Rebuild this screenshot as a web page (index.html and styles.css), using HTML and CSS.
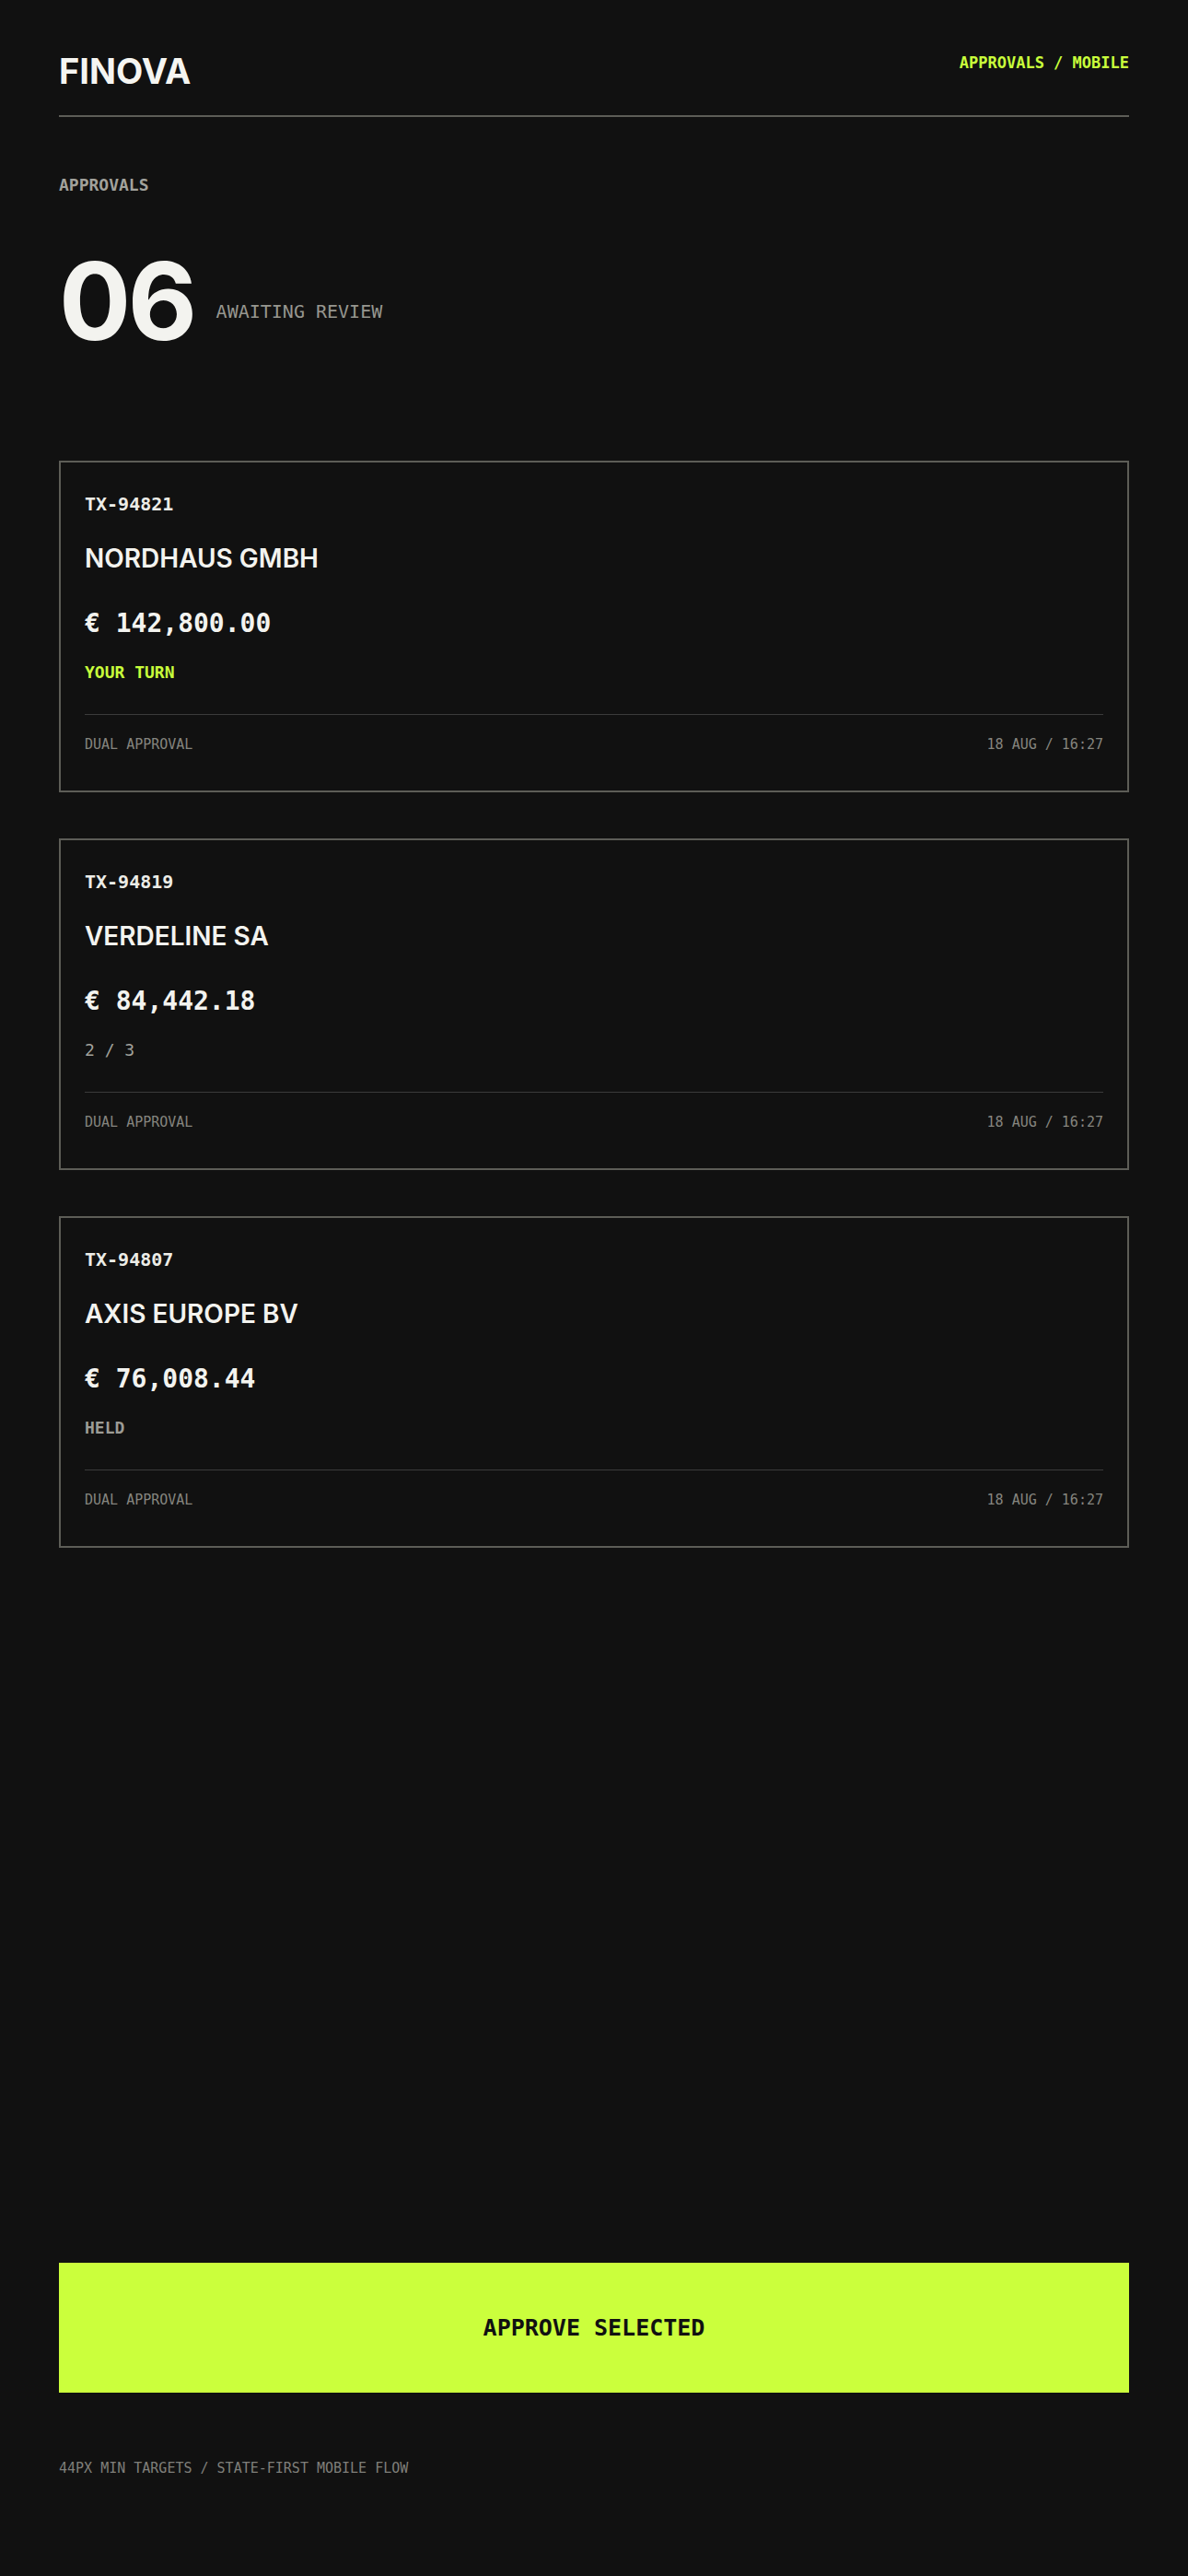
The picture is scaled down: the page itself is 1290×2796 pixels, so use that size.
FILE: index.html
```html
<!DOCTYPE html>
<html lang="en">
<head>
    <meta charset="UTF-8">
    <meta name="viewport" content="width=device-width, initial-scale=1.0">
    <title>Finova - Approvals</title>
    <link rel="stylesheet" href="styles.css">
</head>
<body>
    <div class="page">
        <header class="topbar">
            <div class="brand">FINOVA</div>
            <div class="crumb">APPROVALS / MOBILE</div>
        </header>

        <p class="section-label">APPROVALS</p>

        <div class="hero">
            <span class="count">06</span>
            <span class="count-sub">AWAITING REVIEW</span>
        </div>

        <!-- Approval queue -->
        <div class="cards">
            <div class="card">
                <div class="tx-id">TX-94821</div>
                <div class="payee">NORDHAUS GMBH</div>
                <div class="amount">€ 142,800.00</div>
                <div class="status status-turn">YOUR TURN</div>
                <div class="card-foot">
                    <span>DUAL APPROVAL</span>
                    <span>18 AUG / 16:27</span>
                </div>
            </div>

            <div class="card">
                <div class="tx-id">TX-94819</div>
                <div class="payee">VERDELINE SA</div>
                <div class="amount">€ 84,442.18</div>
                <div class="status status-progress">2 / 3</div>
                <div class="card-foot">
                    <span>DUAL APPROVAL</span>
                    <span>18 AUG / 16:27</span>
                </div>
            </div>

            <div class="card">
                <div class="tx-id">TX-94807</div>
                <div class="payee">AXIS EUROPE BV</div>
                <div class="amount">€ 76,008.44</div>
                <div class="status status-held">HELD</div>
                <div class="card-foot">
                    <span>DUAL APPROVAL</span>
                    <span>18 AUG / 16:27</span>
                </div>
            </div>
        </div>

        <div class="actions">
            <button class="approve-btn">APPROVE SELECTED</button>
            <p class="note">44PX MIN TARGETS / STATE-FIRST MOBILE FLOW</p>
        </div>
    </div>
</body>
</html>
```

FILE: styles.css
```css
* {
    box-sizing: border-box;
}
body {
    margin: 0;
    background-color: #111111;
    color: #f3f3ef;
    font-family: "DejaVu Sans Mono", "Liberation Mono", monospace;
}
.page {
    min-height: 100vh;
    display: flex;
    flex-direction: column;
    padding: 58px 64px 109px;
}
.topbar {
    display: flex;
    justify-content: space-between;
    align-items: flex-start;
    padding-bottom: 29px;
    border-bottom: 2px solid #5d5d57;
}
.brand {
    font-family: Inter, "Noto Sans", sans-serif;
    font-size: 38px;
    font-weight: 700;
    line-height: 1;
    color: #f5f5f1;
}
.crumb {
    margin-top: 2px;
    font-size: 17px;
    font-weight: 700;
    line-height: 1;
    color: #c9ff3b;
}
.section-label {
    margin: 65px 0 0;
    font-size: 18px;
    font-weight: 700;
    line-height: 1;
    color: #a2a29c;
}
.hero {
    display: flex;
    align-items: flex-end;
    gap: 24px;
    margin-top: 59px;
}
.count {
    font-family: Inter, "Noto Sans", sans-serif;
    font-size: 116px;
    font-weight: 700;
    line-height: 1;
    letter-spacing: -0.03em;
    color: #f3f3ef;
}
.count-sub {
    margin-bottom: 37px;
    font-size: 20px;
    line-height: 1;
    color: #96968f;
}
.cards {
    display: flex;
    flex-direction: column;
    gap: 50px;
    margin-top: 115px;
}
.card {
    border: 2px solid #5d5d57;
    padding: 35px 26px 42px;
}
.tx-id {
    font-size: 20px;
    font-weight: 700;
    line-height: 1;
    color: #ecece7;
}
.payee {
    margin-top: 35px;
    font-family: Inter, "Noto Sans", sans-serif;
    font-size: 28px;
    font-weight: 600;
    line-height: 1;
    color: #f3f3ef;
}
.amount {
    margin-top: 43px;
    font-size: 28px;
    font-weight: 700;
    line-height: 1;
    color: #f3f3ef;
}
.status {
    margin-top: 30px;
    font-size: 18px;
    line-height: 1;
}
.status-turn {
    font-weight: 700;
    color: #c9ff3b;
}
.status-progress {
    color: #a2a29c;
}
.status-held {
    font-weight: 700;
    color: #9c9c96;
}
.card-foot {
    display: flex;
    justify-content: space-between;
    margin-top: 36px;
    padding-top: 25px;
    border-top: 1px solid #3b3b3b;
    font-size: 15px;
    line-height: 1;
    color: #85857f;
}
.actions {
    margin-top: auto;
}
.approve-btn {
    display: block;
    width: 100%;
    height: 141px;
    border: none;
    background-color: #cbff3c;
    color: #111111;
    font-family: "DejaVu Sans Mono", "Liberation Mono", monospace;
    font-size: 25px;
    font-weight: 700;
    cursor: pointer;
}
.note {
    margin: 75px 0 0;
    font-size: 15px;
    line-height: 1;
    color: #7f7f7a;
}
```
